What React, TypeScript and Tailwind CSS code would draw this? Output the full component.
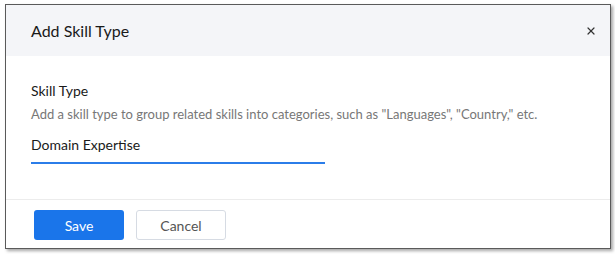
import React from "react";
import { X } from "lucide-react";

export default function App() {
  return (
    <div className="w-[615px] h-[254px] bg-white pl-[5px] pt-[4px] font-['Lato',sans-serif]">
      <div className="w-[606px] h-[245px] border border-[#5a5a5a] shadow-[2px_2px_3px_rgba(0,0,0,0.35)] flex flex-col bg-white">
        {/* Header */}
        <div className="h-[51px] bg-[#f4f5f8] flex items-center justify-between pl-[25px] pr-[13px]">
          <span className="text-[16px] text-[#1a1a1a]">Add Skill Type</span>
          <button className="text-[#333]">
            <X className="w-[12px] h-[12px]" strokeWidth={2.4} />
          </button>
        </div>

        {/* Body */}
        <div className="flex-1 pl-[25px] pt-[25px]">
          <div className="text-[14px] text-[#1a1a1a] leading-[20px]">Skill Type</div>
          <div className="text-[13px] text-[#777] leading-[18px] mt-[4px]">
            Add a skill type to group related skills into categories, such as "Languages", "Country," etc.
          </div>
          <div className="w-[294px] mt-[11px] border-b-2 border-b-[#2b7de9] pb-[7px] leading-[20px]">
            <span className="text-[14px] text-[#1a1a1a]">Domain Expertise</span>
          </div>
        </div>

        {/* Footer */}
        <div className="h-[49px] border-t border-[#ececec] flex items-start gap-[12px] pl-[28px] pt-[10px]">
          <button className="w-[90px] h-[30px] rounded-[3px] bg-[#1a75ea] text-white text-[14px]">Save</button>
          <button className="w-[90px] h-[30px] rounded-[3px] border border-[#d6dbe3] bg-white text-[#555] text-[14px]">Cancel</button>
        </div>
      </div>
    </div>
  );
}
